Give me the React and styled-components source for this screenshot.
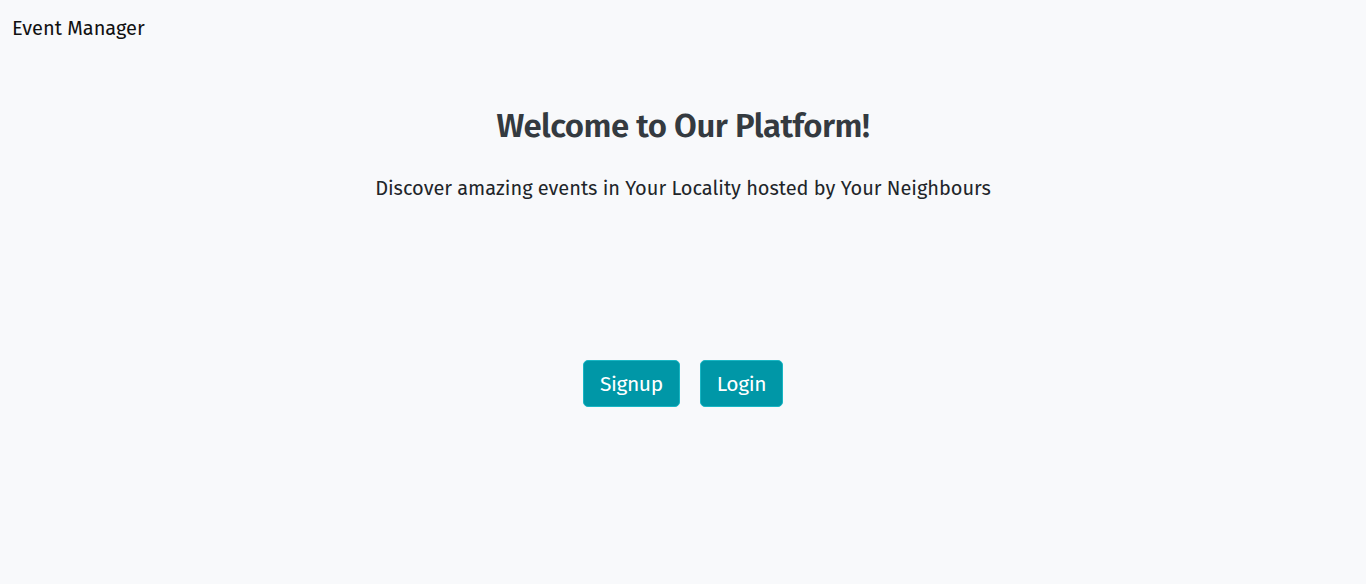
import React from 'react';
import styled, { createGlobalStyle } from 'styled-components';

const GlobalStyle = createGlobalStyle`
  html, body {
    margin: 0;
    padding: 0;
    background: #f8f9fb;
    font-family: "Fira Sans", "Noto Sans", "Liberation Sans", sans-serif;
  }
`;

const Page = styled.div`
  min-height: 584px;
  background: #f8f9fb;
`;

const Navbar = styled.nav`
  height: 56px;
  display: flex;
  align-items: center;
  padding: 0 12px;
`;

const Brand = styled.span`
  font-size: 20px;
  color: #111;
`;

const Hero = styled.main`
  display: flex;
  flex-direction: column;
  align-items: center;
  padding-top: 50px;
`;

const Title = styled.h1`
  margin: 0;
  font-size: 33px;
  font-weight: 600;
  color: #343a40;
  letter-spacing: -0.5px;
`;

const Subtitle = styled.p`
  margin: 30px 0 0;
  font-size: 20px;
  color: #212529;
  letter-spacing: -0.02px;
`;

const Actions = styled.div`
  display: flex;
  gap: 20px;
  margin-top: 160px;
`;

const Button = styled.button`
  height: 47px;
  padding: 0 16px;
  border: 1px solid #19b6c4;
  border-radius: 5px;
  background: #0097a7;
  color: #fff;
  font-family: inherit;
  font-size: 21px;
  letter-spacing: -0.4px;
  cursor: pointer;
`;

export default function App() {
  return (
    <Page>
      <GlobalStyle />
      <Navbar>
        <Brand>Event Manager</Brand>
      </Navbar>
      <Hero>
        <Title>Welcome to Our Platform!</Title>
        <Subtitle>Discover amazing events in Your Locality hosted by Your Neighbours</Subtitle>
        <Actions>
          <Button>Signup</Button>
          <Button>Login</Button>
        </Actions>
      </Hero>
    </Page>
  );
}
